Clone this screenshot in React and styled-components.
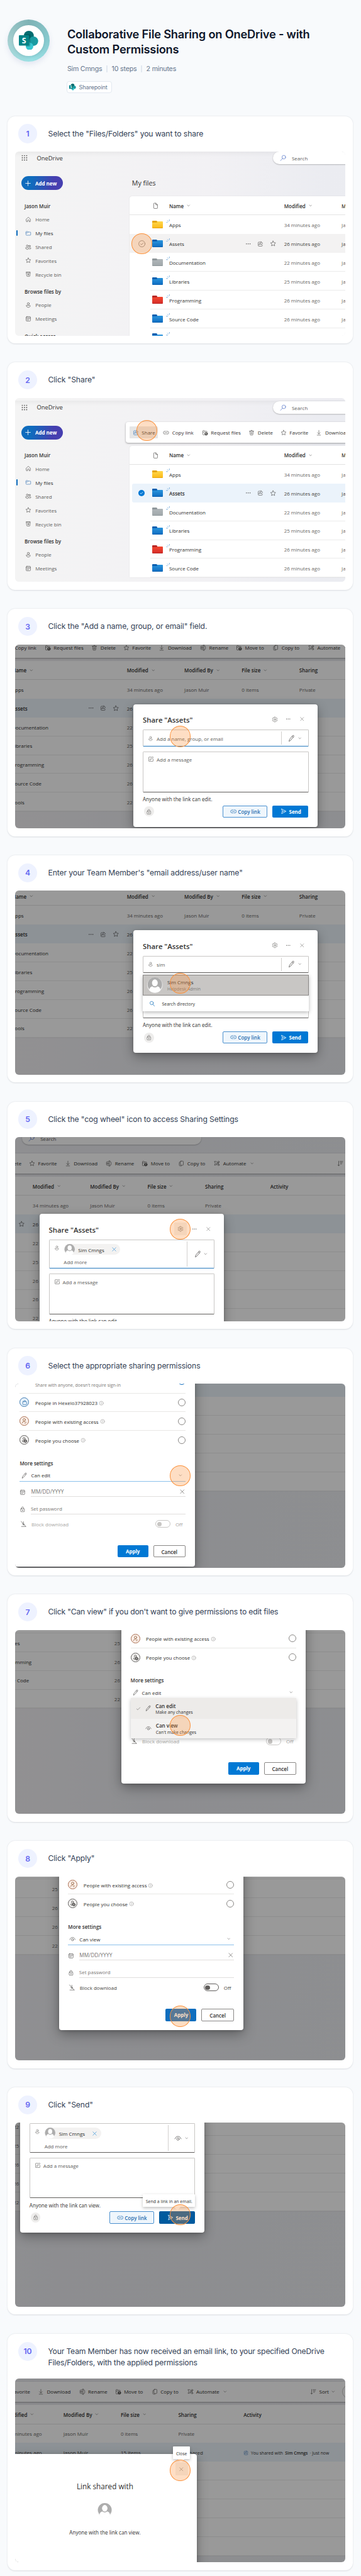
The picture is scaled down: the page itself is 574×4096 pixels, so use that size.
import React from "react";
import styled, { createGlobalStyle, css } from "styled-components";
import { Settings } from "lucide-react";

const GlobalStyle = createGlobalStyle`
  * { box-sizing: border-box; }
  body { margin: 0; background: #f8fafc; }
`;

const UI = css`font-family: "Inter", "Liberation Sans", sans-serif;`;
const OFFICE = css`font-family: "Open Sans", "Noto Sans", sans-serif; font-size: 8px; line-height: 11px;`;

/* ---------- icons ---------- */

const ICONS = {
  home: <path d="M3.5 8.8 10 2.8l6.5 6V16a1 1 0 0 1-1 1h-3v-4.5a1 1 0 0 0-1-1h-3a1 1 0 0 0-1 1V17h-3a1 1 0 0 1-1-1z" />,
  folder: <path d="M2.5 5.5A1.5 1.5 0 0 1 4 4h3.5l2 2H16a1.5 1.5 0 0 1 1.5 1.5v7A1.5 1.5 0 0 1 16 16H4a1.5 1.5 0 0 1-1.5-1.5zM2.5 8.5h5l2-2.5" />,
  people: <><circle cx="6.8" cy="6" r="3" /><circle cx="14.2" cy="6.5" r="2.3" /><path d="M2 12h9.5v1.5c0 2.2-1.9 3.7-4.7 3.7S2 15.7 2 13.5zM13.5 12H18v1.3c0 2-1.6 3.1-4.2 3.1" /></>,
  star: <path d="m10 2.3 2.4 4.9 5.3.8-3.9 3.7 1 5.3-4.8-2.5L5.200 17l1-5.300L2.300 8l5.300-.8z" />,
  bin: <><path d="M4 3h12l-1 12.700A1.600 1.600 0 0 1 13.400 17H6.600A1.600 1.600 0 0 1 5 15.700zM4.500 6h11" /><path d="m10 8.500 1.700 3M12 13H8l2-4.500" /></>,
  person: <><circle cx="10" cy="5.8" r="3.3" /><path d="M4 11.500h12V13c0 2.600-2.400 4.500-6 4.500S4 15.600 4 13z" /></>,
  calendar: <><rect x="3" y="2.8" width="14" height="14.4" rx="2.5" /><path d="M3 6.500h14M6 10h1.500M9.300 10h1.500M12.600 10h1.500M6 13.500h1.500M9.300 13.500h1.500" /></>,
  doc: <path d="M4.500 3.500A1.500 1.500 0 0 1 6 2h5l5 5v9.500A1.500 1.500 0 0 1 14.500 18H6a1.500 1.500 0 0 1-1.500-1.500zM11 2v5h5" />,
  share: <path d="M9 3.800H5.500A2.500 2.500 0 0 0 3 6.300v8.200A2.500 2.500 0 0 0 5.500 17h8.200a2.500 2.500 0 0 0 2.500-2.500V13M12 2.500l5.500 5-5.500 5V9.700c-3 0-4.800 1-6 3.300 0-4 2.200-7 6-7.500z" />,
  link: <path d="M8.500 5.500H6a4.500 4.500 0 0 0 0 9h2.500M11.500 5.500H14a4.500 4.500 0 0 1 0 9h-2.500M6.500 10h7" />,
  request: <><path d="M8 17H4.500A1.500 1.500 0 0 1 3 15.500V4.500A1.500 1.500 0 0 1 4.500 3h3l2 2.500H15A1.500 1.500 0 0 1 16.500 7v1M3 8h4.500l2-2.500" /><circle cx="13.5" cy="13.5" r="4.7" fill="currentColor" /><path d="m15 15-3-3m0 2.500V12h2.500" stroke="#fff" /></>,
  move: <><path d="M8 17H4.500A1.500 1.500 0 0 1 3 15.500V4.500A1.500 1.500 0 0 1 4.500 3h3l2 2.500H15A1.500 1.500 0 0 1 16.500 7v1M3 8h4.500l2-2.500" /><circle cx="13.5" cy="13.5" r="4.7" fill="currentColor" /><path d="M13.500 16v-5m-1.500 1.500 1.500-1.500 1.500 1.500" stroke="#fff" /></>,
  trash: <path d="M3 5h14M4.700 5l1 11a1.600 1.600 0 0 0 1.600 1.500h5.400a1.600 1.600 0 0 0 1.600-1.500l1-11M7.800 5V4.300a2.200 2.200 0 0 1 4.400 0V5M8.500 8.500v5.500M11.500 8.500v5.500" />,
  download: <path d="M10 2.500V14M5.500 9.800 10 14.300l4.500-4.500M4.500 17.700h11" />,
  rename: <path d="M9.500 4.500H5A2.500 2.500 0 0 0 2.500 7v6A2.500 2.500 0 0 0 5 15.500h4.500M14.500 4.500A2.800 2.800 0 0 1 17.500 7v6a2.800 2.800 0 0 1-3 2.500M12 2v16M10 2h4M10 18h4M5.500 8.500h4v3h-4z" />,
  copy: <><rect x="7.5" y="2.5" width="9.5" height="13" rx="2" /><path d="M7.500 5A2.500 2.500 0 0 0 4 7.500V15a2.700 2.700 0 0 0 2.700 2.700h4.500" /></>,
  automate: <><path d="M2.500 3.500h4.700c1 0 1.700.5 2.200 1.300L11 7.500 6.500 14c-.6.800-1.300 1.200-2.200 1.200H2l2.500-5z" /><circle cx="15" cy="5" r="2.3" /><circle cx="15" cy="14.5" r="2.3" /><path d="m13.500 7-5 8M15 7.500v4.500" /></>,
  sort: <path d="M5 2.500v14.500M2 14.500 5 17.500l3-3M9 3.500h9M10 7.500h6.500M11 11.500h3.500" />,
  dots: <g fill="currentColor" stroke="none"><circle cx="4" cy="10" r="1.5" /><circle cx="10" cy="10" r="1.5" /><circle cx="16" cy="10" r="1.5" /></g>,
  close: <path d="m4 4 12 12M16 4 4 16" />,
  pencil: <path d="M13.800 2.800a1.900 1.900 0 0 1 3 2.500L8 15.800 4.300 18l1-4.300zM12.400 4.600l2.900 2.500" />,
  compose: <path d="M10.500 3.500H4A1 1 0 0 0 3 4.500V16a1 1 0 0 0 1 1h12a1 1 0 0 0 1-1V9.500M15.500 2.500l2 2-8 8-3 1 1-3z" />,
  lock: <><rect x="4" y="8" width="12" height="9.8" rx="1.5" /><path d="M6.800 8V5.500a3.200 3.200 0 0 1 6.400 0V8" /><circle cx="10" cy="13" r=".8" fill="currentColor" /></>,
  send: <path d="M3.500 2.500 18 10 3.500 17.500 6 10zM6 10h7" />,
  eye: <><path d="M2 11.500C3 7.700 6 5 10 5s7 2.700 8 6.500" /><circle cx="10" cy="12" r="3.2" /></>,
  block: <path d="M10 3v9M6 9l4 4 3-3M4 17.500h13M3 2l14 15.500" />,
  check: <path d="m3.500 10.500 4 4 9-9.500" />,
  search: <><circle cx="8.5" cy="8" r="5.5" /><path d="m12.500 12 5 6" /></>,
  searchLeft: <><circle cx="12" cy="7.5" r="5.5" /><path d="m8 11.500-6 6.500" /></>,
  info: <><circle cx="10" cy="10" r="7.5" /><path d="M10 9v5M10 6v1" /></>,
  plus: <path d="M10 1.500v17M1.500 10h17" />,
  chevron: <path d="m3.500 7 6.500 6.500L16.500 7" />,
  checkCircle: <><circle cx="10" cy="10" r="8.8" /><path d="m6.500 10.500 2.500 2.300 4.700-5" /></>,
  waffle: <g fill="currentColor" stroke="none">{[3, 10, 17].map((y) => [3, 10, 17].map((x) => <circle key={`${x}-${y}`} cx={x} cy={y} r="1.7" />))}</g>,
  bag: <><rect x="5" y="7.5" width="10" height="7.5" rx="1" /><path d="M8 7.500V5h4v2.500" /></>,
  personCheck: <><circle cx="10" cy="7" r="3" /><path d="M5.500 15c0-2.600 1.500-4 4.500-4 1 0 2 .2 2.700.6M11 14.500l1.300 1.300 2.700-2.700" /></>,
  personAdd: <><circle cx="9.5" cy="6.8" r="2.6" /><path d="M8.500 15C6 15 5.300 14 5.300 12h4.200" /><circle cx="13" cy="13" r="3.3" fill="currentColor" /><path d="M13 11.500v3M11.500 13h3" stroke="#fff" strokeWidth=".8" /></>,
};

const Glyph = styled.svg`
  flex: none;
  display: block;
  width: ${(p) => p.$size}px;
  height: ${(p) => p.$size}px;
  color: ${(p) => p.$color || "#484644"};
  fill: none;
  stroke: currentColor;
  stroke-linejoin: round;
  stroke-linecap: round;
`;
const Icon = ({ name, size = 10, color, weight = 1.2, className }) => (
  <Glyph className={className} viewBox="0 0 20 20" $size={size} $color={color} strokeWidth={weight}>{ICONS[name]}</Glyph>
);

const SharepointLogo = ({ size }) => (
  <svg width={size} height={size} viewBox="0 0 32 32">
    <circle cx="16.5" cy="8.3" r="8.3" fill="#036c70" />
    <circle cx="24.3" cy="17.2" r="7.7" fill="#1a9ba1" />
    <circle cx="17.7" cy="25.8" r="6.2" fill="#37c6d0" />
    <path d="M10 6h7.500a1.500 1.500 0 0 1 1.500 1.500V24a2 2 0 0 1-2 2h-5.500A6.200 6.200 0 0 1 12 23z" fill="#000" opacity=".18" />
    <rect x="0" y="7.3" width="17" height="17.2" rx="1.4" fill="#038387" />
    <text x="8.5" y="20.6" textAnchor="middle" fontFamily="Open Sans, sans-serif" fontWeight="700" fontSize="13" fill="#fff">S</text>
  </svg>
);

const FolderArt = styled.span`
  display: block;
  position: relative;
  width: 17.8px;
  height: 11px;
  margin-top: 0.5px;
  border-radius: 1px;
  background: linear-gradient(${(p) => p.$c[0]}, ${(p) => p.$c[1]} 88%, ${(p) => p.$c[2]} 90%);
  &::before {
    content: "";
    position: absolute;
    left: 0;
    top: -1.5px;
    width: 8px;
    height: 3px;
    border-radius: 1px 1.5px 1.5px 0;
    background: ${(p) => p.$c[2]};
  }
`;
const FOLDERS = {
  yellow: ["#ffd84d", "#fcbc1d", "#e5a50f"],
  blue: ["#2b95dd", "#1271c4", "#0a5fb0"],
  grey: ["#b1b7ba", "#a2a9ac", "#8f979b"],
  red: ["#f4472f", "#d8302a", "#b92724"],
};

const AvatarSvg = styled.svg`display: block; flex: none;`;
const Avatar = ({ size }) => (
  <AvatarSvg width={size} height={size} viewBox="0 0 32 32">
    <circle cx="16" cy="16" r="16" fill="#ededed" />
    <circle cx="16" cy="15" r="15" fill="#adadad" />
    <ellipse cx="16" cy="11.5" rx="6" ry="7.2" fill="#fff" />
    <path d="M4.500 27c0-5 3-8.200 6.500-8.200 1.500 1.300 3 2 5 2s3.500-.7 5-2c3.500 0 6.500 3.200 6.500 8.200A16 16 0 0 1 16 32 16 16 0 0 1 4.500 27z" fill="#fff" />
  </AvatarSvg>
);

/* ---------- page frame ---------- */

const Page = styled.main`
  width: 574px;
  height: 4096px;
  overflow: hidden;
  background: #f8fafc;
  ${UI}
`;
const Intro = styled.header`
  display: flex;
  align-items: flex-start;
  height: 184.5px;
  padding: 30.5px 12.1px 0;
`;
const LogoRing = styled.div`
  flex: none;
  display: grid;
  place-items: center;
  width: 67.2px;
  height: 67.2px;
  border-radius: 50%;
  background: conic-gradient(#7fb3b5, #88cacf 90deg, #9be1e5 170deg, #a5cfd0 270deg, #7fb3b5);
  box-shadow: 0 4px 9px rgba(100, 116, 180, 0.14);
`;
const LogoDisc = styled.div`
  display: grid;
  place-items: center;
  width: 49px;
  height: 49px;
  border-radius: 50%;
  background: #fff;
  box-shadow: 0 2px 4px rgba(0, 60, 70, 0.14);
`;
const IntroText = styled.div`margin: 11.2px 0 0 27.6px;`;
const Title = styled.h1`
  margin: 0;
  font-size: 18.3px;
  line-height: 24.4px;
  font-weight: 600;
  letter-spacing: -0.225px;
  color: #0f172a;
  white-space: nowrap;
`;
const Meta = styled.div`
  display: flex;
  align-items: center;
  margin-top: 13.2px;
  height: 12.2px;
  font-size: 10.67px;
  letter-spacing: -0.19px;
  color: #64748b;
`;
const MetaRule = styled.span`
  width: 1.5px;
  height: 10.7px;
  margin: 0 6.7px 0 6.9px;
  background: #e2e8f0;
`;
const Tag = styled.div`
  display: flex;
  align-items: center;
  gap: 4.4px;
  height: 19.7px;
  width: 72.2px;
  margin: 12.9px 0 0 -1px;
  padding: 0 3.5px;
  border: 0.8px solid #e2e8f0;
  border-radius: 4px;
  background: #fff;
  font-size: 9.15px;
  letter-spacing: -0.15px;
  color: #64748b;
`;
const Steps = styled.ol`
  list-style: none;
  margin: 0;
  padding: 0 12.7px 0 12.1px;
  display: flex;
  flex-direction: column;
  gap: 30.45px;
`;
const Card = styled.li`
  height: ${(p) => (p.$tall ? 375.8 : 361.38)}px;
  border-radius: 12.2px;
  background: #fff;
  box-shadow: 0 0.8px 2.3px rgba(15, 23, 42, 0.13);
  padding: 12.7px 12.3px 0 12.4px;
`;
const StepHead = styled.div`
  display: flex;
  height: ${(p) => (p.$tall ? 58.1 : 43.7)}px;
`;
const Badge = styled.span`
  flex: none;
  display: grid;
  place-items: center;
  width: 30.4px;
  height: 30.4px;
  margin-left: 4.4px;
  border-radius: 50%;
  background: #eef2ff;
  color: #6366f1;
  font-size: 12.2px;
  font-weight: 600;
`;
const StepText = styled.p`
  margin: 6.4px 0 0 17.2px;
  font-size: 12.2px;
  line-height: 18.3px;
  letter-spacing: ${(p) => (p.$long ? -0.185 : -0.12)}px;
  color: #334155;
`;
const Capture = styled.div`
  position: relative;
  overflow: hidden;
  width: 524.2px;
  height: 292.7px;
  border-radius: 6px;
  background: linear-gradient(90deg, #f4f4f4, #f2f1f4 60%, #ececf1);
  ${OFFICE}
  color: #323130;
`;
const Dim = styled.div`
  position: absolute;
  inset: 0;
  background: rgba(0, 0, 0, 0.4);
`;
const Pin = styled.span`
  position: absolute;
  left: ${(p) => p.$x - 16.6}px;
  top: ${(p) => p.$y - 16.7}px;
  width: 33.2px;
  height: 33.4px;
  border: 1.5px solid #fb923c;
  border-radius: 50%;
  background: rgba(251, 146, 60, 0.3);
`;

/* ---------- OneDrive window ---------- */

const Window = styled.div`
  width: 1100px;
  height: 700px;
  margin: ${(p) => p.$y}px 0 0 ${(p) => p.$x}px;
  background: linear-gradient(90deg, #f4f4f4, #f2f1f4 28%, #ebecf1 45%, #edeef2);
`;
const TopBar = styled.div`
  display: flex;
  align-items: center;
  height: 21px;
  padding-left: 9.5px;
  background: linear-gradient(rgba(0, 0, 0, 0.04), transparent 40%);
`;
const AppName = styled.span`
  width: 376px;
  margin-left: 14.6px;
  font-size: 9.4px;
  font-weight: 500;
`;
const SearchPill = styled.div`
  display: flex;
  align-items: center;
  gap: 8.2px;
  width: 285px;
  height: 19.8px;
  padding: 0.6px 0 0 10.8px;
  border-radius: 10px;
  background: #fff;
  box-shadow: 0 0.8px 2px rgba(0, 0, 0, 0.28);
  color: #605e5c;
`;
const WindowBody = styled.div`display: flex;`;
const Sidebar = styled.nav`
  flex: none;
  width: 181.2px;
  padding: 18.1px 0 0 9.5px;
`;
const AddNew = styled.div`
  display: flex;
  align-items: center;
  gap: 6.5px;
  width: 66px;
  height: 22.1px;
  padding: 0.6px 0 0 6.4px;
  border-radius: 11px;
  background: linear-gradient(100deg, #0f6cbd 25%, #463fb0 75%);
  color: #fff;
  font-weight: 700;
`;
const NavHeading = styled.div`
  display: flex;
  align-items: center;
  height: 20px;
  margin: ${(p) => (p.$first ? 15.2 : 6.2)}px 0 0.3px 5.1px;
  font-weight: 600;
`;
const NavItem = styled.div`
  position: relative;
  display: flex;
  align-items: center;
  gap: 6.1px;
  height: 21.99px;
  padding-left: 6.1px;
  color: ${(p) => (p.$active ? "#323130" : "#605e5c")};
  ${(p) => p.$active && css`
    &::before {
      content: "";
      position: absolute;
      left: -7.5px;
      width: 1.6px;
      height: 9.3px;
      border-radius: 1px;
      background: #0f6cbd;
    }
  `}
`;
const Content = styled.section`flex: 1;`;
const ContentHead = styled.div`
  height: 50.1px;
  padding: 13px 0 0;
`;
const PageTitle = styled.div`
  padding: 9.2px 0 0 4.1px;
  font-size: 10.7px;
  line-height: 15px;
  font-weight: 500;
`;
const Toolbar = styled.div`
  display: flex;
  align-items: center;
  height: 32.1px;
  margin-left: -5.5px;
  padding-left: 5.5px;
  border-radius: 4px;
  background: #fff;
  box-shadow: 0 1px 3px rgba(0, 0, 0, 0.35);
`;
const Tool = styled.div`
  display: flex;
  align-items: center;
  gap: 4.5px;
  width: ${(p) => p.$w}px;
  white-space: nowrap;
`;
const ShareTool = styled(Tool)`
  height: 19.8px;
  margin-right: 7.9px;
  padding-left: 5.2px;
  border-radius: 1px;
  background: #e6e6e6;
`;
const ToolSpacer = styled.span`width: ${(p) => p.$w}px;`;
const SelectionPill = styled.span`
  width: 60px;
  height: 22px;
  margin-left: 2px;
  border: 0.8px solid #c8c6c4;
  border-radius: 11px;
`;
const Table = styled.div`
  border-radius: 4px 0 0 0;
  background: #fff;
  box-shadow: 0 0 1.5px rgba(0, 0, 0, 0.14);
`;
const COLUMNS = "29.6px 182.7px 91.4px 91.3px 91.5px 103.7px 1fr";
const HeadRow = styled.div`
  display: grid;
  grid-template-columns: ${COLUMNS};
  align-items: center;
  height: 30.5px;
  padding: 1px 0 0 33.7px;
  border-bottom: 0.8px solid #e3e3e3;
  font-weight: 600;
`;
const HeadCell = styled.span`
  display: flex;
  align-items: center;
  gap: 4.8px;
`;
const Row = styled.div`
  display: flex;
  align-items: stretch;
  height: 29.88px;
  ${(p) => p.$state === "hover" && css`background: #f3f2f2;`}
  ${(p) => p.$state === "selected" && css`
    margin-left: 4.8px;
    border-radius: 3px 0 0 3px;
    background: #ebf3fb;
  `}
`;
const CheckCell = styled.div`
  flex: none;
  display: flex;
  align-items: center;
  width: ${(p) => (p.$selected ? 28.9 : 33.7)}px;
  padding-left: ${(p) => (p.$selected ? 9.4 : 14.1)}px;
`;
const SelectedDot = styled.span`
  display: grid;
  place-items: center;
  width: 10px;
  height: 10px;
  border-radius: 50%;
  background: #0078d4;
`;
const RowCells = styled.div`
  flex: 1;
  display: grid;
  grid-template-columns: ${COLUMNS};
  align-items: center;
  padding-top: 1.6px;
  border-bottom: 0.8px solid ${(p) => (p.$plain ? "transparent" : "#ebebeb")};
  color: ${(p) => (p.$strong ? "#484644" : "#6b6967")};
`;
const FolderCell = styled.span`padding-left: 2.2px;`;
const NameCell = styled.span`
  position: relative;
  display: flex;
  align-items: center;
  color: #323130;
  font-weight: ${(p) => (p.$bold ? 600 : 400)};
`;
const NewMark = styled.svg`
  position: absolute;
  left: -5px;
  top: -3.5px;
  width: 6.2px;
  height: 5.6px;
  stroke: #5b9bd5;
  fill: none;
`;
const RowActions = styled.span`
  display: flex;
  align-items: center;
  gap: 9.6px;
  margin-left: auto;
  padding-right: 12.2px;
`;
const Activity = styled.span`
  display: flex;
  align-items: center;
  gap: 3.3px;
  padding-top: 1px;
  font-size: 6.8px;
  white-space: nowrap;
  color: #323130;
  & b { font-weight: 600; }
`;
const SharedCell = styled.span`
  display: flex;
  align-items: center;
  gap: 3px;
`;

const FILES = [
  ["Apps", "yellow", "34 minutes ago", "0 items"],
  ["Assets", "blue", "26 minutes ago", "15 items"],
  ["Documentation", "grey", "22 minutes ago", ""],
  ["Libraries", "blue", "25 minutes ago", ""],
  ["Programming", "red", "26 minutes ago", ""],
  ["Source Code", "blue", "26 minutes ago", ""],
  ["Tools", "blue", "22 minutes ago", ""],
];
const TOOLS = [
  ["link", "Copy link", 61.5],
  ["request", "Request files", 74.6],
  ["trash", "Delete", 50.5],
  ["star", "Favorite", 56.6],
  ["download", "Download", 65.5],
  ["rename", "Rename", 57.1],
  ["move", "Move to", 58.1],
  ["copy", "Copy to", 56.8],
  ["automate", "Automate", 57.4],
];

const Chevron = () => <Icon name="chevron" size={5.6} weight={2} color="#605e5c" />;

const OneDrive = ({ x = 0, y = 0, state, toolbar, shared, trim }) => (
  <Window $x={x} $y={y}>
    <TopBar>
      <Icon name="waffle" size={9.9} />
      <AppName>OneDrive</AppName>
      <SearchPill><Icon name="searchLeft" size={10.5} color="#5878c8" weight={1.4} />Search</SearchPill>
    </TopBar>
    <WindowBody>
      <Sidebar>
        <AddNew><Icon name="plus" size={9} color="#fff" weight={1.9} />Add new</AddNew>
        <NavHeading $first>Jason Muir</NavHeading>
        <NavItem><Icon name="home" />Home</NavItem>
        <NavItem $active><Icon name="folder" color="#2b6cb0" />My files</NavItem>
        <NavItem><Icon name="people" />Shared</NavItem>
        <NavItem><Icon name="star" />Favorites</NavItem>
        <NavItem><Icon name="bin" />Recycle bin</NavItem>
        <NavHeading>Browse files by</NavHeading>
        <NavItem><Icon name="person" />People</NavItem>
        <NavItem><Icon name="calendar" />Meetings</NavItem>
        {!trim && <NavHeading>Quick access</NavHeading>}
      </Sidebar>
      <Content>
        <ContentHead>
          {toolbar ? (
            <Toolbar>
              <ShareTool $w={45.7}><Icon name="share" color="#2b6cb0" />Share</ShareTool>
              {TOOLS.map(([icon, label, w]) => <Tool key={label} $w={w}><Icon name={icon} />{label}</Tool>)}
              <Chevron />
              <ToolSpacer $w={132.5} />
              <Tool $w={49}><Icon name="sort" />Sort <Chevron /></Tool>
              <SelectionPill />
            </Toolbar>
          ) : <PageTitle>My files</PageTitle>}
        </ContentHead>
        <Table>
          <HeadRow>
            <HeadCell><FolderCell><Icon name="doc" size={10.5} /></FolderCell></HeadCell>
            <HeadCell>Name <Chevron /></HeadCell>
            <HeadCell>Modified <Chevron /></HeadCell>
            <HeadCell>Modified By <Chevron /></HeadCell>
            <HeadCell>File size <Chevron /></HeadCell>
            <HeadCell>Sharing</HeadCell>
            <HeadCell>Activity</HeadCell>
          </HeadRow>
          {(trim ? FILES.slice(0, 6) : FILES).map(([name, color, modified, size], i) => {
            const active = i === 1;
            const rowState = active ? state : undefined;
            return (
              <Row key={name} $state={rowState}>
                <CheckCell $selected={rowState === "selected"}>
                  {rowState === "hover" && <Icon name="checkCircle" size={11.3} color="#605e5c" />}
                  {rowState === "selected" && <SelectedDot><Icon name="check" size={6} color="#fff" weight={2.6} /></SelectedDot>}
                </CheckCell>
                <RowCells $plain={active || (i === 0 && state)} $strong={active}>
                  <FolderCell><FolderArt $c={FOLDERS[color]} /></FolderCell>
                  <NameCell $bold={rowState === "selected"}>
                    <NewMark viewBox="0 0 12 11"><path d="M0 9.5h6M4 3l3.5 3.5M10.5 0v5" strokeWidth="1.5" /></NewMark>
                    {name}
                    {active && (
                      <RowActions>
                        <Icon name="dots" size={9.5} /><Icon name="share" /><Icon name="star" size={10.5} />
                      </RowActions>
                    )}
                  </NameCell>
                  <span>{modified}</span>
                  <span>Jason Muir</span>
                  <span>{size}</span>
                  {active && shared ? <SharedCell><Icon name="people" />Shared</SharedCell> : <span>{i === 0 ? "Private" : ""}</span>}
                  {active && shared && (
                    <Activity><Icon name="share" size={8.5} color="#2b6cb0" />You shared with <b>Sim Cmngs</b> · Just now</Activity>
                  )}
                </RowCells>
              </Row>
            );
          })}
        </Table>
      </Content>
    </WindowBody>
  </Window>
);

/* ---------- dialogs ---------- */

const Dialog = styled.div`
  position: absolute;
  left: ${(p) => p.$x}px;
  top: ${(p) => p.$y}px;
  width: 292.9px;
  padding: 0 14.7px;
  border-radius: 4px;
  background: #fff;
  box-shadow: 0 6px 18px rgba(0, 0, 0, 0.32), 0 1px 4px rgba(0, 0, 0, 0.2);
`;
const DialogHead = styled.div`
  display: flex;
  align-items: center;
  height: 40.4px;
  padding-top: 9.4px;
`;
const DialogTitle = styled.div`
  flex: 1;
  font-size: 11.35px;
  line-height: 15px;
  font-weight: 600;
`;
const HeadAction = styled.span`
  display: grid;
  place-items: center;
  width: 20px;
  height: 19.8px;
  margin: -2.5px 0 0 1.8px;
  border-radius: 1px;
  background: ${(p) => (p.$hover ? "#f3f2f1" : "none")};
  color: #605e5c;
`;
const Field = styled.div`
  display: flex;
  width: 263.6px;
  height: ${(p) => p.$h}px;
  border: 0.9px solid #c8c6c4;
  border-bottom: ${(p) => (p.$focus ? "1.5px solid #2479bd" : "1px solid #605e5c")};
  border-radius: 1.5px;
  color: #605e5c;
`;
const FieldBody = styled.div`
  flex: 1;
  display: flex;
  align-items: ${(p) => (p.$tall ? "flex-start" : "center")};
  gap: 5px;
  padding: ${(p) => (p.$tall ? "6.2px" : "1.2px")} 0 0 7.3px;
`;
const PersonMark = styled(Icon)`margin-top: ${(p) => (p.$drop ? 2 : 0)}px;`;
const PermissionPick = styled.div`
  display: flex;
  align-items: center;
  gap: 4.5px;
  width: 42.8px;
  margin: 2px 0;
  padding-left: 9.4px;
  border-left: 0.9px solid #d2d0ce;
`;
const Message = styled(Field)`
  height: 64.6px;
  margin-top: 7.7px;
  padding: 6.5px 0 0 7.3px;
  gap: 3.7px;
  border-bottom: 1px solid #605e5c;
`;
const LinkNote = styled.div`
  height: 21px;
  padding-top: 5.5px;
  font-size: 8.08px;
  white-space: nowrap;
`;
const Actions = styled.div`
  display: flex;
  align-items: center;
  height: 19.5px;
  margin-bottom: 14.5px;
`;
const LockDisc = styled.span`
  display: grid;
  place-items: center;
  width: 15.8px;
  height: 15.8px;
  margin: 0 auto 0 1.8px;
  border-radius: 50%;
  background: #eeedec;
`;
const OutlineButton = styled.span`
  display: flex;
  align-items: center;
  justify-content: center;
  gap: 2px;
  width: ${(p) => p.$w}px;
  height: 19.6px;
  padding: ${(p) => (p.$blue ? "0 0 0 0.5px" : "1px 0 0")};
  border: 0.9px solid ${(p) => (p.$blue ? "#4a90cf" : "#8a8886")};
  border-radius: 2px;
  background: ${(p) => (p.$blue ? "#eff6fc" : "#fff")};
  color: ${(p) => (p.$blue ? "#1f6cb0" : "#323130")};
  font-weight: 600;
`;
const SolidButton = styled.span`
  display: flex;
  align-items: center;
  justify-content: center;
  gap: 3.2px;
  width: ${(p) => p.$w}px;
  height: 19.6px;
  margin: 0 ${(p) => p.$mr || 0}px 0 7.3px;
  padding-left: ${(p) => p.$pl || 0}px;
  border-radius: 2px;
  background: ${(p) => p.$bg || "#0078d4"};
  color: #fff;
  font-weight: 700;
  letter-spacing: -0.05px;
`;
const Recipient = styled.div`
  display: flex;
  flex-direction: column;
  gap: 5.6px;
  margin-left: 2.5px;
`;
const AddMore = styled.div`margin-left: -0.8px;`;
const Chip = styled.span`
  display: flex;
  align-items: center;
  width: 89.3px;
  height: 17.5px;
  border-radius: 9px;
  background: #f3f2f1;
  color: #323130;
  & > span { width: 47.3px; margin: 1.2px 5.5px 0 4.7px; white-space: nowrap; }
`;
const Suggestions = styled.div`
  position: absolute;
  left: 14.7px;
  top: 70.4px;
  width: 263.6px;
  background: #fff;
  box-shadow: 0 2px 6px rgba(0, 0, 0, 0.28);
`;
const SuggestedPerson = styled.div`
  display: flex;
  align-items: center;
  gap: 7.3px;
  height: 33.3px;
  padding-left: 6.3px;
  border: 0.9px solid #8a8886;
  background: #c8c6c4;
  line-height: 10.5px;
`;
const SuggestedText = styled.div`padding-top: 3px;`;
const SubText = styled.div`font-size: 6.95px; color: #7f7d7b;`;
const DirectorySearch = styled.div`
  display: flex;
  align-items: center;
  gap: 10.8px;
  height: 24.9px;
  padding: 1.6px 0 0 10px;
  font-size: 6.9px;
`;
const Tooltip = styled.div`
  position: absolute;
  left: ${(p) => p.$x}px;
  top: ${(p) => p.$y}px;
  width: ${(p) => p.$w}px;
  height: 19.7px;
  padding-top: 5.6px;
  text-align: center;
  white-space: nowrap;
  font-size: 6.95px;
  border-radius: 1px;
  background: #fff;
  box-shadow: 0 2px 5px rgba(0, 0, 0, 0.25);
  &::after {
    content: "";
    position: absolute;
    top: 100%;
    left: ${(p) => p.$tip}px;
    border: 5px solid transparent;
    border-top: 6px solid rgba(255, 255, 255, 0.85);
    border-bottom: 0;
  }
`;

const DialogActions = ({ sendColor }) => (
  <Actions>
    <LockDisc><Icon name="lock" size={9.5} color="#605e5c" /></LockDisc>
    <OutlineButton $blue $w={71.7}><Icon name="link" color="#1f6cb0" size={10.5} weight={1.4} />Copy link</OutlineButton>
    <SolidButton $w={57.8} $pl={2} $bg={sendColor}><Icon name="send" color="#fff" weight={1.5} />Send</SolidButton>
  </Actions>
);

const ShareDialog = ({ x, y, value, recipient, focus, gearHover, permission = "pencil", note, sendColor, children }) => (
  <Dialog $x={x} $y={y}>
    <DialogHead>
      <DialogTitle>Share "Assets"</DialogTitle>
      <HeadAction $hover={gearHover}><Settings size={10} strokeWidth={1.4} /></HeadAction>
      <HeadAction><Icon name="dots" size={8.5} color="#605e5c" /></HeadAction>
      <HeadAction><Icon name="close" size={8.5} color="#605e5c" /></HeadAction>
    </DialogHead>
    <Field $h={recipient ? 46.8 : 26.9} $focus={focus}>
      <FieldBody $tall={recipient}>
        <PersonMark $drop={recipient} name="person" size={8.8} color="#605e5c" />
        {recipient ? (
          <Recipient>
            <Chip><Avatar size={17.5} /><span>Sim Cmngs</span><Icon name="close" size={9} color="#2f8fd8" weight={1.5} /></Chip>
            <AddMore>Add more</AddMore>
          </Recipient>
        ) : <span>{value || "Add a name, group, or email"}</span>}
      </FieldBody>
      <PermissionPick><Icon name={permission} size={12} /><Chevron /></PermissionPick>
    </Field>
    <Message $h={64.6}><Icon name="compose" color="#605e5c" />Add a message</Message>
    <LinkNote>{note}</LinkNote>
    <DialogActions sendColor={sendColor} />
    {children}
  </Dialog>
);

const SettingsDialog = styled.div`
  position: absolute;
  left: ${(p) => p.$x}px;
  bottom: ${(p) => p.$b}px;
  display: flex;
  flex-direction: column;
  width: 292.9px;
  padding: 40px 14.7px 14.7px;
  border-radius: 4px;
  background: #fff;
  box-shadow: 0 6px 20px rgba(0, 0, 0, 0.35), 0 1px 4px rgba(0, 0, 0, 0.2);
`;
const Audience = styled.div`
  display: flex;
  align-items: center;
  height: 29.9px;
  border-bottom: 0.9px solid ${(p) => (p.$last ? "transparent" : "#e8e7e6")};
`;
const AudienceIcon = styled.span`
  display: grid;
  place-items: center;
  width: 15px;
  height: 15px;
  margin-right: 9.5px;
  border: 0.9px solid ${(p) => p.$c};
  border-radius: 50%;
  background: ${(p) => p.$bg};
`;
const AudienceLabel = styled.span`
  flex: 1;
  display: flex;
  align-items: center;
  gap: 2px;
  padding-top: 1.6px;
`;
const Radio = styled.span`
  width: 12.3px;
  height: 12.3px;
  border: 1.2px solid #8a8886;
  border-radius: 50%;
`;
const FirstAudience = styled.div`
  display: flex;
  justify-content: space-between;
  height: 30px;
  padding: 11.4px 0 0 24.5px;
  border-bottom: 0.9px solid #e8e7e6;
  font-size: 6.95px;
  color: #7a7876;
`;
const CheckedRadio = styled(Radio)`
  margin-top: -7px;
  border-color: #0f6cbd;
`;
const SettingsHeading = styled.div`
  height: 12px;
  margin: 15.5px 0 3.5px;
  font-weight: 600;
`;
const Setting = styled.div`
  display: flex;
  align-items: center;
  gap: ${(p) => p.$gap || 7.6}px;
  height: ${(p) => p.$h}px;
  padding: ${(p) => p.$pad || "0"};
  border-bottom: ${(p) => p.$line || "0"};
  color: ${(p) => p.$color || "#323130"};
`;
const SettingIcon = styled(Icon)`margin-top: ${(p) => p.$drop}px;`;
const SettingValue = styled.span`
  flex: 1;
  align-self: stretch;
  display: flex;
  align-items: center;
  justify-content: space-between;
  padding: ${(p) => p.$pad};
  border-bottom: 0.9px solid #e1dfdd;
  font-size: ${(p) => p.$size || 8}px;
  color: #7a7876;
`;
const Label = styled.span`flex: 1;`;
const Toggle = styled.span`
  width: 24.6px;
  height: 12.4px;
  padding: 1.8px;
  border: 0.9px solid ${(p) => (p.$off ? "#c8c6c4" : "#605e5c")};
  border-radius: 7px;
  &::before {
    content: "";
    display: block;
    width: 7.5px;
    height: 7.5px;
    border-radius: 50%;
    background: ${(p) => (p.$off ? "#c8c6c4" : "#605e5c")};
  }
`;
const SettingsButtons = styled.div`
  display: flex;
  justify-content: flex-end;
  margin-top: 18.7px;
`;
const Menu = styled.div`
  position: absolute;
  left: 14.7px;
  bottom: 72.4px;
  width: 263.6px;
  box-shadow: 0 2px 6px rgba(0, 0, 0, 0.24);
`;
const MenuItem = styled.div`
  display: flex;
  align-items: center;
  gap: 6.6px;
  height: ${(p) => (p.$active ? 32.5 : 31.3)}px;
  padding-left: ${(p) => (p.$active ? 8 : 23.6)}px;
  background: ${(p) => (p.$active ? "#edebe9" : "#f3f2f1")};
  line-height: 10.3px;
  & b { font-weight: 600; font-size: 8.1px; }
`;
const MenuText = styled.div`padding-top: ${(p) => p.$pad}px;`;
const MenuSub = styled.div`font-size: 6.93px;`;

const PermissionSettings = ({ x, b, value, icon, open, enabled, focus = true, applyColor }) => (
  <SettingsDialog $x={x} $b={b}>
    <FirstAudience>Share with anyone, doesn't require sign-in<CheckedRadio /></FirstAudience>
    <Audience>
      <AudienceIcon $c="#3a78b0" $bg="#e8f2fb"><Icon name="bag" size={12.5} color="#3a78b0" /></AudienceIcon>
      <AudienceLabel>People in Hexelo37928023 <Icon name="info" size={8.3} color="#8a8886" /></AudienceLabel>
      <Radio />
    </Audience>
    <Audience>
      <AudienceIcon $c="#a86b4c" $bg="#fbf0ea"><Icon name="personCheck" size={13} color="#8e562e" /></AudienceIcon>
      <AudienceLabel>People with existing access <Icon name="info" size={8.3} color="#8a8886" /></AudienceLabel>
      <Radio />
    </Audience>
    <Audience $last>
      <AudienceIcon $c="#605e5c" $bg="#f3f2f1"><Icon name="personAdd" size={13} color="#484644" /></AudienceIcon>
      <AudienceLabel>People you choose <Icon name="info" size={8.3} color="#8a8886" /></AudienceLabel>
      <Radio />
    </Audience>
    <SettingsHeading>More settings</SettingsHeading>
    <Setting $h={20} $pad="0.5px 5.5px 0 2px" $gap={5.5} $line={focus ? "1.6px solid #8cc1ec" : "1.6px solid transparent"}>
      <Icon name={icon} size={10.5} /><Label>{value}</Label><Chevron />
    </Setting>
    <Setting $h={24}>
      <SettingIcon $drop={9} name="calendar" size={9.8} /><SettingValue $size={8.4} $pad="8px 0.5px 0 0.5px">MM/DD/YYYY <Icon name="close" size={9.5} /></SettingValue>
    </Setting>
    <Setting $h={27.4}>
      <SettingIcon $drop={12} name="lock" size={9.8} /><SettingValue $pad="11px 0 0 0">Set password</SettingValue>
    </Setting>
    <Setting $h={30.6} $gap={7.5} $pad="0.6px 4.5px 0 0.5px" $color={enabled ? "#484644" : "#a8a6a4"}>
      <Icon name="block" size={10.5} /><Label>Block download</Label><Toggle $off={!enabled} />Off
    </Setting>
    <SettingsButtons>
      <SolidButton $w={49} $mr={7.9} $bg={applyColor}>Apply</SolidButton>
      <OutlineButton $w={51.5}>Cancel</OutlineButton>
    </SettingsButtons>
    {open && (
      <Menu>
        <MenuItem $active>
          <Icon name="check" size={8} /><Icon name="pencil" size={10.5} />
          <MenuText $pad={3}><b>Can edit</b><MenuSub>Make any changes</MenuSub></MenuText>
        </MenuItem>
        <MenuItem>
          <Icon name="eye" size={10} />
          <MenuText $pad={2.4}><b>Can view</b><MenuSub>Can't make changes</MenuSub></MenuText>
        </MenuItem>
      </Menu>
    )}
  </SettingsDialog>
);

const Confirmation = styled(Dialog)`
  display: flex;
  flex-direction: column;
  align-items: center;
  height: 220px;
`;
const CloseAction = styled(HeadAction)`
  align-self: flex-end;
  margin: 14.2px 0 0;
`;
const ConfirmTitle = styled.div`
  margin: 8.5px 0 18.3px;
  font-size: 11.75px;
  line-height: 17px;
  font-weight: 500;
`;
const ConfirmNote = styled.div`
  margin-top: 17.5px;
  font-size: 8.1px;
`;

/* ---------- steps ---------- */

const SPOT = { x: 262.1, y: 146.4 };

const STEPS = [
  ['Select the "Files/Folders" you want to share',
    <><OneDrive state="hover" /><Pin $x={201} $y={146.4} /></>],
  ['Click "Share"',
    <><OneDrive y={4.8} state="selected" toolbar trim /><Pin $x={209.2} $y={51.8} /></>],
  ['Click the "Add a name, group, or email" field.',
    <><OneDrive x={-250} y={-45} state="selected" toolbar /><Dim />
      <ShareDialog x={187.8} y={95.5} focus note="Anyone with the link can edit." /><Pin $x={SPOT.x} $y={SPOT.y} /></>],
  ['Enter your Team Member\'s "email address/user name"',
    <><OneDrive x={-250} y={-77.5} state="selected" toolbar /><Dim />
      <ShareDialog x={187.8} y={63} value="sim" note="Anyone with the link can edit.">
        <Suggestions>
          <SuggestedPerson><Avatar size={24.5} /><SuggestedText>Sim Cmngs<SubText>Helpdesk Admin</SubText></SuggestedText></SuggestedPerson>
          <DirectorySearch><Icon name="search" size={9.8} color="#2479bd" weight={1.5} />Search directory</DirectorySearch>
        </Suggestions>
      </ShareDialog><Pin $x={SPOT.x} $y={SPOT.y + 0.9} /></>],
  ['Click the "cog wheel" icon to access Sharing Settings',
    <><OneDrive x={-399.8} y={-8.4} state="selected" toolbar /><Dim />
      <ShareDialog x={38.4} y={122} recipient focus gearHover note="Anyone with the link can edit." /><Pin $x={SPOT.x} $y={SPOT.y} /></>],
  ["Select the appropriate sharing permissions",
    <><OneDrive x={-430} y={-139.8} state="selected" toolbar /><Dim />
      <PermissionSettings x={-7.7} b={1.5} value="Can edit" icon="pencil" /><Pin $x={SPOT.x} $y={SPOT.y} /></>],
  ['Click "Can view" if you don\'t want to give permissions to edit files',
    <><OneDrive x={-269.8} y={-186} state="selected" toolbar /><Dim />
      <PermissionSettings x={168.4} b={48} value="Can edit" icon="pencil" open focus={false} /><Pin $x={SPOT.x} $y={151.7} /></>],
  ['Click "Apply"',
    <><OneDrive x={-369} y={-186.3} state="selected" toolbar /><Dim />
      <PermissionSettings x={69.2} b={48} value="Can view" icon="eye" enabled applyColor="#106ebe" /><Pin $x={SPOT.x} $y={222.4} /></>],
  ['Click "Send"',
    <><OneDrive x={-430.5} y={-170.3} state="selected" toolbar /><Dim />
      <ShareDialog x={7.7} y={-39.5} recipient permission="eye" note="Anyone with the link can view." sendColor="#005a9e" />
      <Tooltip $x={202.8} $y={113.6} $w={83.1} $tip={50}>Send a link in an email.</Tooltip><Pin $x={SPOT.x} $y={SPOT.y} /></>],
  ["Your Team Member has now received an email link, to your specified OneDrive Files/Folders, with the applied permissions",
    <><OneDrive x={-442.4} y={-28.7} state="selected" toolbar shared /><Dim />
      <Confirmation $x={-4} $y={120.7}>
        <CloseAction $hover><Icon name="close" size={8.5} color="#605e5c" /></CloseAction>
        <ConfirmTitle>Link shared with</ConfirmTitle>
        <Avatar size={23.2} />
        <ConfirmNote>Anyone with the link can view.</ConfirmNote>
      </Confirmation>
      <Tooltip $x={250.4} $y={108.5} $w={27.5} $tip={8.5}>Close</Tooltip><Pin $x={SPOT.x} $y={SPOT.y} /></>],
];

export default function App() {
  return (
    <Page>
      <GlobalStyle />
      <Intro>
        <LogoRing><LogoDisc><SharepointLogo size={30.7} /></LogoDisc></LogoRing>
        <IntroText>
          <Title>Collaborative File Sharing on OneDrive - with<br />Custom Permissions</Title>
          <Meta>Sim Cmngs<MetaRule />10 steps<MetaRule />2 minutes</Meta>
          <Tag><SharepointLogo size={10.7} />Sharepoint</Tag>
        </IntroText>
      </Intro>
      <Steps>
        {STEPS.map(([text, scene], i) => {
          const tall = i === 9;
          return (
            <Card key={text} $tall={tall}>
              <StepHead $tall={tall}><Badge>{i + 1}</Badge><StepText $long={text.length > 60}>{text}</StepText></StepHead>
              <Capture>{scene}</Capture>
            </Card>
          );
        })}
      </Steps>
    </Page>
  );
}
